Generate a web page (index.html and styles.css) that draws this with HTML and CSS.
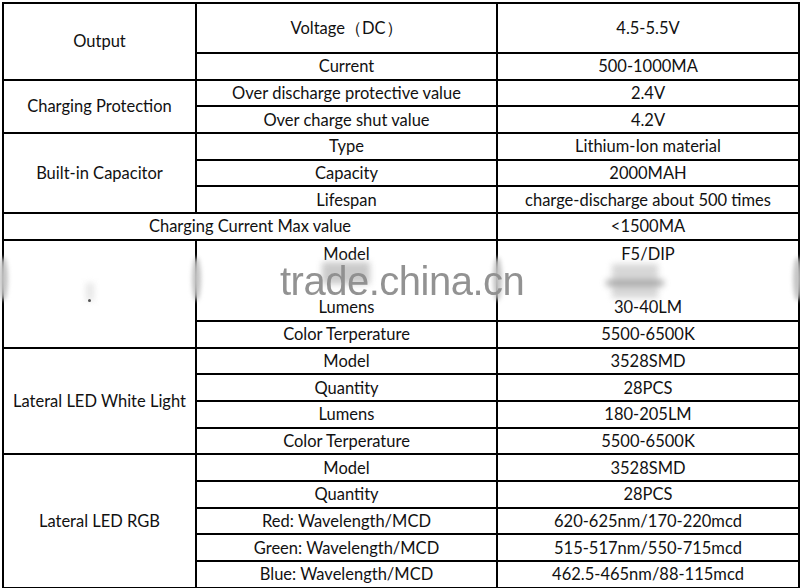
FILE: index.html
```html
<!DOCTYPE html>
<html>
<head>
<meta charset="utf-8">
<link rel="stylesheet" href="styles.css">
</head>
<body>
<div class="page">
<table class="spec">
  <colgroup><col class="c1"><col class="c2"><col class="c3"></colgroup>
  <tr class="tall"><td rowspan="2">Output</td><td>Voltage（DC）</td><td>4.5-5.5V</td></tr>
  <tr><td>Current</td><td>500-1000MA</td></tr>
  <tr><td rowspan="2">Charging Protection</td><td>Over discharge protective value</td><td>2.4V</td></tr>
  <tr><td>Over charge shut value</td><td>4.2V</td></tr>
  <tr><td rowspan="3">Built-in Capacitor</td><td>Type</td><td>Lithium-Ion material</td></tr>
  <tr><td>Capacity</td><td>2000MAH</td></tr>
  <tr><td>Lifespan</td><td>charge-discharge about 500 times</td></tr>
  <tr><td colspan="2">Charging Current Max value</td><td>&lt;1500MA</td></tr>
  <tr class="merged"><td rowspan="2"></td>
    <td><div class="split"><span>Model</span><span>Lumens</span></div></td>
    <td><div class="split"><span>F5/DIP</span><span>30-40LM</span></div></td></tr>
  <tr><td>Color Terperature</td><td>5500-6500K</td></tr>
  <tr><td rowspan="4">Lateral LED White Light</td><td>Model</td><td>3528SMD</td></tr>
  <tr><td>Quantity</td><td>28PCS</td></tr>
  <tr><td>Lumens</td><td>180-205LM</td></tr>
  <tr><td>Color Terperature</td><td>5500-6500K</td></tr>
  <tr><td rowspan="5">Lateral LED RGB</td><td>Model</td><td>3528SMD</td></tr>
  <tr><td>Quantity</td><td>28PCS</td></tr>
  <tr><td>Red: Wavelength/MCD</td><td>620-625nm/170-220mcd</td></tr>
  <tr><td>Green: Wavelength/MCD</td><td>515-517nm/550-715mcd</td></tr>
  <tr><td>Blue: Wavelength/MCD</td><td>462.5-465nm/88-115mcd</td></tr>
</table>
<div class="smudge s-left"></div>
<div class="smudge s-c1"></div>
<div class="smudge s-c2"></div>
<div class="smudge s-right"></div>
<div class="blob b1"></div>
<div class="blob b2"></div>
<div class="blob b3"></div>
<div class="blob b4"></div>
<div class="dotmark"></div>
<div class="watermark">trade.china.cn</div>
</div>
</body>
</html>
```
FILE: styles.css
```css
html, body {
  margin: 0;
  padding: 0;
  background: #ffffff;
}
.page {
  position: relative;
  width: 800px;
  height: 588px;
  padding: 2px 0 0 2px;
  box-sizing: border-box;
  font-family: Lato, "Open Sans", sans-serif;
  font-size: 16.5px;
  color: #111111;
}
.spec {
  border-collapse: collapse;
  table-layout: fixed;
  width: 796px;
}
.c1 { width: 193px; }
.c2 { width: 301px; }
.c3 { width: 302px; }
.spec td {
  border: 2px solid #000000;
  padding: 0;
  height: 24.7px;
  text-align: center;
  vertical-align: middle;
  line-height: 18px;
  white-space: nowrap;
}
.spec tr.tall td { height: 48px; }
.spec tr.merged > td { height: 79px; }
.split {
  display: flex;
  flex-direction: column;
  justify-content: space-between;
  height: 78px;
  padding: 4px 0 3px;
  box-sizing: border-box;
}
.smudge {
  position: absolute;
  width: 9px;
  height: 44px;
  top: 257px;
  border-radius: 50%;
  background: #c4c4c4;
  filter: blur(2px);
}
.s-left { left: -1px; }
.s-c1 { left: 192px; }
.s-c2 { left: 493px; }
.s-right { left: 793px; }
.blob {
  position: absolute;
  background: #bdbdbd;
  filter: blur(3px);
  opacity: 0.8;
}
.b1 { left: 322px; top: 262px; width: 48px; height: 22px; }
.b2 { left: 612px; top: 264px; width: 46px; height: 34px; opacity: 0.6; }
.b3 { left: 606px; top: 280px; width: 58px; height: 6px; background: #9a9a9a; }
.b4 { left: 86px; top: 283px; width: 8px; height: 18px; background: #e0e0e0; }
.dotmark {
  position: absolute;
  left: 88px;
  top: 299px;
  width: 3px;
  height: 3px;
  border-radius: 50%;
  background: #555;
}
.watermark {
  position: absolute;
  left: 280px;
  top: 258px;
  font-family: "Liberation Sans", Arial, sans-serif;
  font-size: 40px;
  letter-spacing: -0.5px;
  color: #8d8d8d;
  line-height: 46px;
  opacity: 0.95;
}
```
